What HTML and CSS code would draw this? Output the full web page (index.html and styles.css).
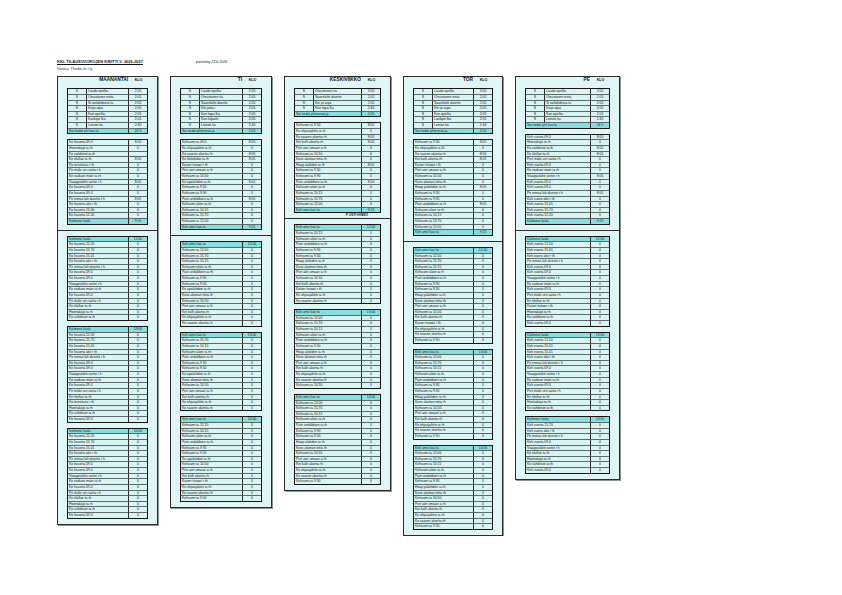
FILE: index.html
```html
<!DOCTYPE html>
<html lang="fi">
<head>
<meta charset="utf-8">
<title>KKL tilausvuorojen kriitti</title>
<link rel="stylesheet" href="styles.css">
</head>
<body>
<div class="page">
  <div class="top">
    <div class="title">KKL TILAUSVUOROJEN KRIITTI V. 2026-2027</div>
    <div class="date">päivitetty 22.6.2026</div>
  </div>
  <div class="sub">Vastaa: Thedia to Oy</div>

  <div class="days">
    <!-- MAANANTAI -->
    <section class="day">
      <div class="head"><span class="name">MAANANTAI</span><span class="klo">KLO</span></div>
      <table class="tbl">
        <tr><td class="s">S</td><td>Lauda opellia</td><td class="v">2:05</td></tr>
        <tr><td class="s">S</td><td>Otsustanen ostia</td><td class="v">2:05</td></tr>
        <tr><td class="s">S</td><td>Si ianlahdesta ta</td><td class="v">2:05</td></tr>
        <tr><td class="s">S</td><td>Kaijo aipa</td><td class="v">2:05</td></tr>
        <tr><td class="s">S</td><td>Kon opellia</td><td class="v">2:05</td></tr>
        <tr><td class="s">S</td><td>Kankipe lka</td><td class="v">2:05</td></tr>
        <tr><td class="s">S</td><td>Leinon tia</td><td class="v">2:40</td></tr>
        <tr class="hd"><td colspan="2">Sai tiedot yht kas ta</td><td class="v">24:5</td></tr>
      </table>
      <table class="tbl">
        <tr><td>Ke lisuorta 09.0</td><td class="v">8:05</td></tr>
        <tr><td>Hiontakäpi ia rh</td><td class="v">0</td></tr>
        <tr><td>Ko vahdisiot ia rh</td><td class="v"></td></tr>
        <tr><td>Ke tilalluo ta rh</td><td class="v">8:05</td></tr>
        <tr><td>Ka tervetunu r th</td><td class="v">0</td></tr>
        <tr><td>Pe mälo urn sarta r h</td><td class="v">0</td></tr>
        <tr><td>Ke vaduan mäin ia rh</td><td class="v">0</td></tr>
        <tr><td>Viaappalahti sortie r h</td><td class="v">8:05</td></tr>
        <tr><td>Ke lisuorta 09.0</td><td class="v">0</td></tr>
        <tr><td>Ke lisuorta 09.0</td><td class="v">0</td></tr>
        <tr><td>Pe inmaa lah duortie r h</td><td class="v">8:05</td></tr>
        <tr><td>Ke lisuorta aloi r th</td><td class="v">0</td></tr>
        <tr><td>Ke lisuorta 15.00</td><td class="v">0</td></tr>
        <tr><td>Ke lisuorta 12.20</td><td class="v">0</td></tr>
        <tr class="hd"><td>Kalmone laula</td><td class="v">9:25</td></tr>
      </table>
      <div class="rule"></div>
      <table class="tbl">
        <tr class="hd"><td>Kalmone laula</td><td class="v">12:00</td></tr>
        <tr><td>Ke lisuorta 12.20</td><td class="v">0</td></tr>
        <tr><td>Ke lisuorta 15.70</td><td class="v">0</td></tr>
        <tr><td>Ke lisuorta 15.01</td><td class="v">0</td></tr>
        <tr><td>Ke lisuorta aloi r th</td><td class="v">0</td></tr>
        <tr><td>Pe inmaa lah duortie r h</td><td class="v">0</td></tr>
        <tr><td>Ke lisuorta 09.0</td><td class="v">0</td></tr>
        <tr><td>Ke lisuorta 09.0</td><td class="v">0</td></tr>
        <tr><td>Viaappalahti sortie r h</td><td class="v">0</td></tr>
        <tr><td>Ke vaduan mäin ia rh</td><td class="v">0</td></tr>
        <tr><td>Ke lisuorta 09.0</td><td class="v">0</td></tr>
        <tr><td>Pe mälo urn sarta r h</td><td class="v">0</td></tr>
        <tr><td>Ke tilalluo ta rh</td><td class="v">0</td></tr>
        <tr><td>Hiontakäpi ia rh</td><td class="v">0</td></tr>
        <tr><td>Ko vahdisiot ia rh</td><td class="v">0</td></tr>
      </table>
      <table class="tbl">
        <tr class="hd"><td>Kalmone laula</td><td class="v">13:00</td></tr>
        <tr><td>Ke lisuorta 12.20</td><td class="v">0</td></tr>
        <tr><td>Ke lisuorta 15.70</td><td class="v">0</td></tr>
        <tr><td>Ke lisuorta 15.01</td><td class="v">0</td></tr>
        <tr><td>Ke lisuorta aloi r th</td><td class="v">0</td></tr>
        <tr><td>Pe inmaa lah duortie r h</td><td class="v">0</td></tr>
        <tr><td>Ke lisuorta 09.0</td><td class="v">0</td></tr>
        <tr><td>Ke lisuorta 09.0</td><td class="v">0</td></tr>
        <tr><td>Viaappalahti sortie r h</td><td class="v">0</td></tr>
        <tr><td>Ke vaduan mäin ia rh</td><td class="v">0</td></tr>
        <tr><td>Ke lisuorta 09.0</td><td class="v">0</td></tr>
        <tr><td>Pe mälo urn sarta r h</td><td class="v">0</td></tr>
        <tr><td>Ke tilalluo ta rh</td><td class="v">0</td></tr>
        <tr><td>Ka tervetunu r th</td><td class="v">0</td></tr>
        <tr><td>Hiontakäpi ia rh</td><td class="v">0</td></tr>
        <tr><td>Ko vahdisiot ia rh</td><td class="v">0</td></tr>
        <tr><td>Ke lisuorta 09.0</td><td class="v">0</td></tr>
      </table>
      <table class="tbl">
        <tr class="hd"><td>Kalmone laula</td><td class="v">10:00</td></tr>
        <tr><td>Ke lisuorta 12.20</td><td class="v">0</td></tr>
        <tr><td>Ke lisuorta 15.70</td><td class="v">0</td></tr>
        <tr><td>Ke lisuorta 15.01</td><td class="v">0</td></tr>
        <tr><td>Ke lisuorta aloi r th</td><td class="v">0</td></tr>
        <tr><td>Pe inmaa lah duortie r h</td><td class="v">0</td></tr>
        <tr><td>Ke lisuorta 09.0</td><td class="v">0</td></tr>
        <tr><td>Ke lisuorta 09.0</td><td class="v">0</td></tr>
        <tr><td>Viaappalahti sortie r h</td><td class="v">0</td></tr>
        <tr><td>Ke vaduan mäin ia rh</td><td class="v">0</td></tr>
        <tr><td>Ke lisuorta 09.0</td><td class="v">0</td></tr>
        <tr><td>Pe mälo urn sarta r h</td><td class="v">0</td></tr>
        <tr><td>Ke tilalluo ta rh</td><td class="v">0</td></tr>
        <tr><td>Hiontakäpi ia rh</td><td class="v">0</td></tr>
        <tr><td>Ko vahdisiot ia rh</td><td class="v">0</td></tr>
        <tr><td>Ke lisuorta 09.0</td><td class="v">0</td></tr>
      </table>
    </section>

    <!-- TI -->
    <section class="day">
      <div class="head"><span class="name">TI</span><span class="klo">KLO</span></div>
      <table class="tbl">
        <tr><td class="s">S</td><td>Lauda opellia</td><td class="v">2:05</td></tr>
        <tr><td class="s">S</td><td>Otsustanen tia</td><td class="v">2:05</td></tr>
        <tr><td class="s">S</td><td>Saarelahti duortie</td><td class="v">2:05</td></tr>
        <tr><td class="s">S</td><td>Kiti joiita i</td><td class="v">2:05</td></tr>
        <tr><td class="s">S</td><td>Kon topa lka</td><td class="v">2:05</td></tr>
        <tr><td class="s">S</td><td>Kan kilpailu</td><td class="v">2:05</td></tr>
        <tr><td class="s">S</td><td>Leinon tia</td><td class="v">2:40</td></tr>
        <tr class="hd"><td colspan="2">Sai tiedot yhteensä ja</td><td class="v">2:05</td></tr>
      </table>
      <table class="tbl">
        <tr><td>Kehuumi ia 09.0</td><td class="v">8:05</td></tr>
        <tr><td>Ke ohjaajaliitin ia rh</td><td class="v">0</td></tr>
        <tr><td>Ko saaren akortia rh</td><td class="v">8:05</td></tr>
        <tr><td>Ke illalohdon ia rh</td><td class="v">8:05</td></tr>
        <tr><td>Kaiser tiviawi r th</td><td class="v">0</td></tr>
        <tr><td>Pert aiin umaari a rh</td><td class="v">0</td></tr>
        <tr><td>Kehuumi ia 10.50</td><td class="v">0</td></tr>
        <tr><td>Ke apalahden ia rh</td><td class="v">8:05</td></tr>
        <tr><td>Kehuumi ia 9.50</td><td class="v">0</td></tr>
        <tr><td>Kehuumi ia 9.90</td><td class="v">0</td></tr>
        <tr><td>Pain undaldoen ia rh</td><td class="v">8:05</td></tr>
        <tr><td>Kehuumi aloin ia rh</td><td class="v">0</td></tr>
        <tr><td>Kehuumi ia 10.15</td><td class="v">0</td></tr>
        <tr><td>Kehuumi ia 15.70</td><td class="v">0</td></tr>
        <tr><td>Kehuumi ia 12.00</td><td class="v">0</td></tr>
        <tr class="hd"><td>Keh ume kas ta</td><td class="v">9:25</td></tr>
      </table>
      <div class="rule"></div>
      <table class="tbl">
        <tr class="hd"><td>Keh ume kas ta</td><td class="v">12:00</td></tr>
        <tr><td>Kehuumi ia 12.00</td><td class="v">0</td></tr>
        <tr><td>Kehuumi ia 15.70</td><td class="v">0</td></tr>
        <tr><td>Kehuumi ia 10.15</td><td class="v">0</td></tr>
        <tr><td>Kehuumi aloin ia rh</td><td class="v">0</td></tr>
        <tr><td>Pain undaldoen ia rh</td><td class="v">0</td></tr>
        <tr><td>Kehuumi ia 9.90</td><td class="v">0</td></tr>
        <tr><td>Kehuumi ia 9.50</td><td class="v">0</td></tr>
        <tr><td>Ke apalahden ia rh</td><td class="v">0</td></tr>
        <tr><td>Koss alaman tetia rh</td><td class="v">0</td></tr>
        <tr><td>Kehuumi ia 10.50</td><td class="v">0</td></tr>
        <tr><td>Pert aiin umaari a rh</td><td class="v">0</td></tr>
        <tr><td>Kei kalh akortia rh</td><td class="v">0</td></tr>
        <tr><td>Ke ohjaajaliitin ia rh</td><td class="v">0</td></tr>
        <tr><td>Ko saaren akortia rh</td><td class="v">0</td></tr>
      </table>
      <table class="tbl">
        <tr class="hd"><td>Keh ume kas ta</td><td class="v">13:00</td></tr>
        <tr><td>Kehuumi ia 15.70</td><td class="v">0</td></tr>
        <tr><td>Kehuumi ia 10.15</td><td class="v">0</td></tr>
        <tr><td>Kehuumi aloin ia rh</td><td class="v">0</td></tr>
        <tr><td>Pain undaldoen ia rh</td><td class="v">0</td></tr>
        <tr><td>Kehuumi ia 9.90</td><td class="v">0</td></tr>
        <tr><td>Kehuumi ia 9.50</td><td class="v">0</td></tr>
        <tr><td>Ke apalahden ia rh</td><td class="v">0</td></tr>
        <tr><td>Koss alaman tetia rh</td><td class="v">0</td></tr>
        <tr><td>Kehuumi ia 10.50</td><td class="v">0</td></tr>
        <tr><td>Pert aiin umaari a rh</td><td class="v">0</td></tr>
        <tr><td>Kei kalh akortia rh</td><td class="v">0</td></tr>
        <tr><td>Ke ohjaajaliitin ia rh</td><td class="v">0</td></tr>
        <tr><td>Ko saaren akortia rh</td><td class="v">0</td></tr>
      </table>
      <table class="tbl">
        <tr class="hd"><td>Keh ume kas ta</td><td class="v">14:00</td></tr>
        <tr><td>Kehuumi ia 15.70</td><td class="v">0</td></tr>
        <tr><td>Kehuumi ia 10.15</td><td class="v">0</td></tr>
        <tr><td>Kehuumi aloin ia rh</td><td class="v">0</td></tr>
        <tr><td>Pain undaldoen ia rh</td><td class="v">0</td></tr>
        <tr><td>Kehuumi ia 9.90</td><td class="v">0</td></tr>
        <tr><td>Kehuumi ia 9.50</td><td class="v">0</td></tr>
        <tr><td>Ke apalahden ia rh</td><td class="v">0</td></tr>
        <tr><td>Kehuumi ia 10.50</td><td class="v">0</td></tr>
        <tr><td>Pert aiin umaari a rh</td><td class="v">0</td></tr>
        <tr><td>Kei kalh akortia rh</td><td class="v">0</td></tr>
        <tr><td>Kaiser tiviawi r th</td><td class="v">0</td></tr>
        <tr><td>Ke ohjaajaliitin ia rh</td><td class="v">0</td></tr>
        <tr><td>Ko saaren akortia rh</td><td class="v">0</td></tr>
        <tr><td>Kehuumi ia 9.50</td><td class="v">0</td></tr>
      </table>
    </section>

    <!-- KESKIVIIKKO -->
    <section class="day">
      <div class="head"><span class="name">KESKIVIIKKO</span><span class="klo">KLO</span></div>
      <table class="tbl">
        <tr><td class="s">S</td><td>Otsustanen tia</td><td class="v">2:05</td></tr>
        <tr><td class="s">S</td><td>Saarelahti duortie</td><td class="v">2:05</td></tr>
        <tr><td class="s">S</td><td>Kiti joi aipa</td><td class="v">2:05</td></tr>
        <tr><td class="s">S</td><td>Kon topa lka</td><td class="v">2:40</td></tr>
        <tr class="hd"><td colspan="2">Sai tiedot yhteensä ja</td><td class="v">2:05</td></tr>
      </table>
      <table class="tbl">
        <tr><td>Kehuumi ia 9.50</td><td class="v">8:05</td></tr>
        <tr><td>Ke ohjaajaliitin ia rh</td><td class="v">0</td></tr>
        <tr><td>Ko saaren akortia rh</td><td class="v">8:05</td></tr>
        <tr><td>Kei kalh akortia rh</td><td class="v">8:05</td></tr>
        <tr><td>Pert aiin umaari a rh</td><td class="v">0</td></tr>
        <tr><td>Kehuumi ia 10.50</td><td class="v">0</td></tr>
        <tr><td>Koss alaman tetia rh</td><td class="v">0</td></tr>
        <tr><td>Haap alahden ia rh</td><td class="v">8:05</td></tr>
        <tr><td>Kehuumi ia 9.50</td><td class="v">0</td></tr>
        <tr><td>Kehuumi ia 9.90</td><td class="v">0</td></tr>
        <tr><td>Pain undaldoen ia rh</td><td class="v">8:05</td></tr>
        <tr><td>Kehuumi aloin ia rh</td><td class="v">0</td></tr>
        <tr><td>Kehuumi ia 10.15</td><td class="v">0</td></tr>
        <tr><td>Kehuumi ia 15.70</td><td class="v">0</td></tr>
        <tr><td>Kehuumi ia 12.00</td><td class="v">0</td></tr>
        <tr class="hd"><td>Keh ume kas ta</td><td class="v">9:25</td></tr>
      </table>
      <div class="note">P OSTI HINNO</div>
      <div class="rule"></div>
      <table class="tbl">
        <tr class="hd"><td>Keh ume kas ta</td><td class="v">12:00</td></tr>
        <tr><td>Kehuumi ia 10.15</td><td class="v">0</td></tr>
        <tr><td>Kehuumi aloin ia rh</td><td class="v">0</td></tr>
        <tr><td>Pain undaldoen ia rh</td><td class="v">0</td></tr>
        <tr><td>Kehuumi ia 9.90</td><td class="v">0</td></tr>
        <tr><td>Kehuumi ia 9.50</td><td class="v">0</td></tr>
        <tr><td>Haap alahden ia rh</td><td class="v">0</td></tr>
        <tr><td>Koss alaman tetia rh</td><td class="v">0</td></tr>
        <tr><td>Pert aiin umaari a rh</td><td class="v">0</td></tr>
        <tr><td>Kehuumi ia 10.50</td><td class="v">0</td></tr>
        <tr><td>Kei kalh akortia rh</td><td class="v">0</td></tr>
        <tr><td>Kaiser tiviawi r th</td><td class="v">0</td></tr>
        <tr><td>Ke ohjaajaliitin ia rh</td><td class="v">0</td></tr>
        <tr><td>Ko saaren akortia rh</td><td class="v">0</td></tr>
      </table>
      <table class="tbl">
        <tr class="hd"><td>Keh ume kas ta</td><td class="v">13:00</td></tr>
        <tr><td>Kehuumi ia 12.00</td><td class="v">0</td></tr>
        <tr><td>Kehuumi ia 15.70</td><td class="v">0</td></tr>
        <tr><td>Kehuumi ia 10.15</td><td class="v">0</td></tr>
        <tr><td>Kehuumi aloin ia rh</td><td class="v">0</td></tr>
        <tr><td>Pain undaldoen ia rh</td><td class="v">0</td></tr>
        <tr><td>Kehuumi ia 9.50</td><td class="v">0</td></tr>
        <tr><td>Haap alahden ia rh</td><td class="v">0</td></tr>
        <tr><td>Koss alaman tetia rh</td><td class="v">0</td></tr>
        <tr><td>Pert aiin umaari a rh</td><td class="v">0</td></tr>
        <tr><td>Kei kalh akortia rh</td><td class="v">0</td></tr>
        <tr><td>Ke ohjaajaliitin ia rh</td><td class="v">0</td></tr>
        <tr><td>Ko saaren akortia rh</td><td class="v">0</td></tr>
        <tr><td>Kehuumi ia 10.50</td><td class="v">0</td></tr>
      </table>
      <table class="tbl">
        <tr class="hd"><td>Keh ume kas ta</td><td class="v">14:00</td></tr>
        <tr><td>Kehuumi ia 12.00</td><td class="v">0</td></tr>
        <tr><td>Kehuumi ia 15.70</td><td class="v">0</td></tr>
        <tr><td>Kehuumi ia 10.15</td><td class="v">0</td></tr>
        <tr><td>Kehuumi aloin ia rh</td><td class="v">0</td></tr>
        <tr><td>Pain undaldoen ia rh</td><td class="v">0</td></tr>
        <tr><td>Kehuumi ia 9.90</td><td class="v">0</td></tr>
        <tr><td>Kehuumi ia 9.50</td><td class="v">0</td></tr>
        <tr><td>Haap alahden ia rh</td><td class="v">0</td></tr>
        <tr><td>Koss alaman tetia rh</td><td class="v">0</td></tr>
        <tr><td>Kehuumi ia 10.50</td><td class="v">0</td></tr>
        <tr><td>Pert aiin umaari a rh</td><td class="v">0</td></tr>
        <tr><td>Kei kalh akortia rh</td><td class="v">0</td></tr>
        <tr><td>Ke ohjaajaliitin ia rh</td><td class="v">0</td></tr>
        <tr><td>Ko saaren akortia rh</td><td class="v">0</td></tr>
        <tr><td>Kehuumi ia 9.50</td><td class="v">0</td></tr>
      </table>
    </section>

    <!-- TOR -->
    <section class="day">
      <div class="head"><span class="name">TOR</span><span class="klo">KLO</span></div>
      <table class="tbl">
        <tr><td class="s">S</td><td>Lauda opellia</td><td class="v">2:05</td></tr>
        <tr><td class="s">S</td><td>Otsustanen ostia</td><td class="v">2:05</td></tr>
        <tr><td class="s">S</td><td>Saarelahti duortie</td><td class="v">2:05</td></tr>
        <tr><td class="s">S</td><td>Kiti joi aipa</td><td class="v">2:05</td></tr>
        <tr><td class="s">S</td><td>Kon opellia</td><td class="v">2:05</td></tr>
        <tr><td class="s">S</td><td>Lankipe lka</td><td class="v">2:05</td></tr>
        <tr><td class="s">S</td><td>Leinon tia</td><td class="v">2:40</td></tr>
        <tr class="hd"><td colspan="2">Sai tiedot yhteensä ja</td><td class="v">2:05</td></tr>
      </table>
      <table class="tbl">
        <tr><td>Kehuumi ia 9.50</td><td class="v">8:05</td></tr>
        <tr><td>Ke ohjaajaliitin ia rh</td><td class="v">0</td></tr>
        <tr><td>Ko saaren akortia rh</td><td class="v">8:05</td></tr>
        <tr><td>Kei kalh akortia rh</td><td class="v">8:05</td></tr>
        <tr><td>Kaiser tiviawi r th</td><td class="v">0</td></tr>
        <tr><td>Pert aiin umaari a rh</td><td class="v">0</td></tr>
        <tr><td>Kehuumi ia 10.50</td><td class="v">0</td></tr>
        <tr><td>Koss alaman tetia rh</td><td class="v">0</td></tr>
        <tr><td>Haap palahden ia rh</td><td class="v">8:05</td></tr>
        <tr><td>Kehuumi ia 9.50</td><td class="v">0</td></tr>
        <tr><td>Kehuumi ia 9.90</td><td class="v">0</td></tr>
        <tr><td>Pain undaldoen ia rh</td><td class="v">8:05</td></tr>
        <tr><td>Kehuumi aloin ia rh</td><td class="v">0</td></tr>
        <tr><td>Kehuumi ia 10.15</td><td class="v">0</td></tr>
        <tr><td>Kehuumi ia 15.70</td><td class="v">0</td></tr>
        <tr><td>Kehuumi ia 12.00</td><td class="v">0</td></tr>
        <tr class="hd"><td>Keh ume kas ta</td><td class="v">9:25</td></tr>
      </table>
      <div class="rule"></div>
      <table class="tbl">
        <tr class="hd"><td>Keh ume kas ta</td><td class="v">12:00</td></tr>
        <tr><td>Kehuumi ia 12.00</td><td class="v">0</td></tr>
        <tr><td>Kehuumi ia 15.70</td><td class="v">0</td></tr>
        <tr><td>Kehuumi ia 10.15</td><td class="v">0</td></tr>
        <tr><td>Kehuumi aloin ia rh</td><td class="v">0</td></tr>
        <tr><td>Pain undaldoen ia rh</td><td class="v">0</td></tr>
        <tr><td>Kehuumi ia 9.90</td><td class="v">0</td></tr>
        <tr><td>Kehuumi ia 9.50</td><td class="v">0</td></tr>
        <tr><td>Haap palahden ia rh</td><td class="v">0</td></tr>
        <tr><td>Koss alaman tetia rh</td><td class="v">0</td></tr>
        <tr><td>Pert aiin umaari a rh</td><td class="v">0</td></tr>
        <tr><td>Kehuumi ia 10.50</td><td class="v">0</td></tr>
        <tr><td>Kei kalh akortia rh</td><td class="v">0</td></tr>
        <tr><td>Kaiser tiviawi r th</td><td class="v">0</td></tr>
        <tr><td>Ke ohjaajaliitin ia rh</td><td class="v">0</td></tr>
        <tr><td>Ko saaren akortia rh</td><td class="v">0</td></tr>
        <tr><td>Kehuumi ia 9.50</td><td class="v">0</td></tr>
      </table>
      <table class="tbl">
        <tr class="hd"><td>Keh ume kas ta</td><td class="v">13:00</td></tr>
        <tr><td>Kehuumi ia 12.00</td><td class="v">0</td></tr>
        <tr><td>Kehuumi ia 15.70</td><td class="v">0</td></tr>
        <tr><td>Kehuumi ia 10.15</td><td class="v">0</td></tr>
        <tr><td>Kehuumi aloin ia rh</td><td class="v">0</td></tr>
        <tr><td>Pain undaldoen ia rh</td><td class="v">0</td></tr>
        <tr><td>Kehuumi ia 9.90</td><td class="v">0</td></tr>
        <tr><td>Kehuumi ia 9.50</td><td class="v">0</td></tr>
        <tr><td>Haap palahden ia rh</td><td class="v">0</td></tr>
        <tr><td>Koss alaman tetia rh</td><td class="v">0</td></tr>
        <tr><td>Kehuumi ia 10.50</td><td class="v">0</td></tr>
        <tr><td>Pert aiin umaari a rh</td><td class="v">0</td></tr>
        <tr><td>Kei kalh akortia rh</td><td class="v">0</td></tr>
        <tr><td>Ke ohjaajaliitin ia rh</td><td class="v">0</td></tr>
        <tr><td>Ko saaren akortia rh</td><td class="v">0</td></tr>
        <tr><td>Kehuumi ia 9.50</td><td class="v">0</td></tr>
      </table>
      <table class="tbl">
        <tr class="hd"><td>Keh ume kas ta</td><td class="v">14:00</td></tr>
        <tr><td>Kehuumi ia 12.00</td><td class="v">0</td></tr>
        <tr><td>Kehuumi ia 15.70</td><td class="v">0</td></tr>
        <tr><td>Kehuumi ia 10.15</td><td class="v">0</td></tr>
        <tr><td>Kehuumi aloin ia rh</td><td class="v">0</td></tr>
        <tr><td>Pain undaldoen ia rh</td><td class="v">0</td></tr>
        <tr><td>Kehuumi ia 9.90</td><td class="v">0</td></tr>
        <tr><td>Haap palahden ia rh</td><td class="v">0</td></tr>
        <tr><td>Koss alaman tetia rh</td><td class="v">0</td></tr>
        <tr><td>Kehuumi ia 10.50</td><td class="v">0</td></tr>
        <tr><td>Pert aiin umaari a rh</td><td class="v">0</td></tr>
        <tr><td>Kei kalh akortia rh</td><td class="v">0</td></tr>
        <tr><td>Ke ohjaajaliitin ia rh</td><td class="v">0</td></tr>
        <tr><td>Ko saaren akortia rh</td><td class="v">0</td></tr>
        <tr><td>Kehuumi ia 9.50</td><td class="v">0</td></tr>
      </table>
    </section>

    <!-- PE -->
    <section class="day">
      <div class="head"><span class="name">PE</span><span class="klo">KLO</span></div>
      <table class="tbl">
        <tr><td class="s">S</td><td>Lauda opellia</td><td class="v">2:05</td></tr>
        <tr><td class="s">S</td><td>Otsustanen ostia</td><td class="v">2:05</td></tr>
        <tr><td class="s">S</td><td>Si ianlahdesta ta</td><td class="v">2:05</td></tr>
        <tr><td class="s">S</td><td>Kaijo aipa</td><td class="v">2:05</td></tr>
        <tr><td class="s">S</td><td>Kon opellia</td><td class="v">2:05</td></tr>
        <tr><td class="s">S</td><td>Leinon tia</td><td class="v">2:40</td></tr>
        <tr class="hd"><td colspan="2">Sai tiedot yht kas ta</td><td class="v">24:5</td></tr>
      </table>
      <table class="tbl">
        <tr><td>Keh vuorta 09.0</td><td class="v">8:05</td></tr>
        <tr><td>Hiontakäpi ia rh</td><td class="v">0</td></tr>
        <tr><td>Ko vahdisiot ia rh</td><td class="v">8:05</td></tr>
        <tr><td>Ke tilalluo ta rh</td><td class="v">8:05</td></tr>
        <tr><td>Pert mälo urn sarta r h</td><td class="v">0</td></tr>
        <tr><td>Keh vuorta 09.0</td><td class="v">0</td></tr>
        <tr><td>Ke vaduan mäin ia rh</td><td class="v">0</td></tr>
        <tr><td>Viaappalahti sortie r h</td><td class="v">8:05</td></tr>
        <tr><td>Keh vuorta 09.0</td><td class="v">0</td></tr>
        <tr><td>Keh vuorta 09.0</td><td class="v">0</td></tr>
        <tr><td>Pe inmaa lah duortie r h</td><td class="v">8:05</td></tr>
        <tr><td>Keh vuoro aloi r th</td><td class="v">0</td></tr>
        <tr><td>Keh vuorta 15.01</td><td class="v">0</td></tr>
        <tr><td>Keh vuorta 15.70</td><td class="v">0</td></tr>
        <tr><td>Keh vuorta 12.20</td><td class="v">0</td></tr>
        <tr class="hd"><td>Kalmone laula</td><td class="v">9:25</td></tr>
      </table>
      <div class="rule"></div>
      <table class="tbl">
        <tr class="hd"><td>Kalmone laula</td><td class="v">12:00</td></tr>
        <tr><td>Keh vuorta 12.20</td><td class="v">0</td></tr>
        <tr><td>Keh vuorta 15.01</td><td class="v">0</td></tr>
        <tr><td>Keh vuoro aloi r th</td><td class="v">0</td></tr>
        <tr><td>Pe inmaa lah duortie r h</td><td class="v">0</td></tr>
        <tr><td>Keh vuorta 09.0</td><td class="v">0</td></tr>
        <tr><td>Keh vuorta 09.0</td><td class="v">0</td></tr>
        <tr><td>Viaappalahti sortie r h</td><td class="v">0</td></tr>
        <tr><td>Ke vaduan mäin ia rh</td><td class="v">0</td></tr>
        <tr><td>Keh vuorta 09.0</td><td class="v">0</td></tr>
        <tr><td>Pert mälo urn sarta r h</td><td class="v">0</td></tr>
        <tr><td>Ke tilalluo ta rh</td><td class="v">0</td></tr>
        <tr><td>Kaiser tiviawi r th</td><td class="v">0</td></tr>
        <tr><td>Hiontakäpi ia rh</td><td class="v">0</td></tr>
        <tr><td>Ko vahdisiot ia rh</td><td class="v">0</td></tr>
        <tr><td>Keh vuorta 09.0</td><td class="v">0</td></tr>
      </table>
      <table class="tbl">
        <tr class="hd"><td>Kalmone laula</td><td class="v">13:00</td></tr>
        <tr><td>Keh vuorta 12.20</td><td class="v">0</td></tr>
        <tr><td>Keh vuorta 15.01</td><td class="v">0</td></tr>
        <tr><td>Keh vuorta 15.01</td><td class="v">0</td></tr>
        <tr><td>Keh vuoro aloi r th</td><td class="v">0</td></tr>
        <tr><td>Pe inmaa lah duortie r h</td><td class="v">0</td></tr>
        <tr><td>Keh vuorta 09.0</td><td class="v">0</td></tr>
        <tr><td>Viaappalahti sortie r h</td><td class="v">0</td></tr>
        <tr><td>Ke vaduan mäin ia rh</td><td class="v">0</td></tr>
        <tr><td>Keh vuorta 09.0</td><td class="v">0</td></tr>
        <tr><td>Pert mälo urn sarta r h</td><td class="v">0</td></tr>
        <tr><td>Ke tilalluo ta rh</td><td class="v">0</td></tr>
        <tr><td>Hiontakäpi ia rh</td><td class="v">0</td></tr>
        <tr><td>Ko vahdisiot ia rh</td><td class="v">0</td></tr>
      </table>
      <table class="tbl">
        <tr class="hd"><td>Kalmone laula</td><td class="v">14:00</td></tr>
        <tr><td>Keh vuorta 15.70</td><td class="v">0</td></tr>
        <tr><td>Keh vuoro aloi r th</td><td class="v">0</td></tr>
        <tr><td>Pe inmaa lah duortie r h</td><td class="v">0</td></tr>
        <tr><td>Keh vuorta 09.0</td><td class="v">0</td></tr>
        <tr><td>Viaappalahti sortie r h</td><td class="v">0</td></tr>
        <tr><td>Ke tilalluo ta rh</td><td class="v">0</td></tr>
        <tr><td>Hiontakäpi ia rh</td><td class="v">0</td></tr>
        <tr><td>Ko vahdisiot ia rh</td><td class="v">0</td></tr>
        <tr><td>Keh vuorta 09.0</td><td class="v">0</td></tr>
      </table>
    </section>
  </div>
</div>
</body>
</html>
```

FILE: styles.css
```css
* {
  box-sizing: border-box;
}

html, body {
  margin: 0;
  background: #ffffff;
}

body {
  font-family: "Liberation Sans", Arial, sans-serif;
  color: #141414;
}

.page {
  padding: 59px 0 0 57px;
}

.top {
  display: flex;
  align-items: center;
  height: 6px;
}

.title {
  width: 139px;
  font-size: 4px;
  line-height: 6px;
  font-weight: bold;
  text-decoration: underline;
  white-space: nowrap;
}

.date {
  font-size: 3.6px;
  line-height: 6px;
  white-space: nowrap;
}

.sub {
  margin-top: 1px;
  height: 6px;
  font-size: 3.8px;
  line-height: 6px;
  color: #333;
  white-space: nowrap;
}

.days {
  display: grid;
  grid-template-columns: 101px 102px 107px 100px 105px;
  column-gap: 12px;
  align-items: start;
  margin-top: 3.7px;
}

.day {
  display: flex;
  flex-direction: column;
  background: #e0f6f6;
  border: 1px solid #2c2c2c;
  box-shadow: 1px 1px 0 #8a9696;
  padding: 0 9px 5px 9px;
}

.head {
  display: flex;
  height: 11.6px;
  font-weight: bold;
  white-space: nowrap;
}

.head .name {
  flex: 1;
  text-align: right;
  font-size: 4.8px;
  line-height: 6.6px;
  padding-right: 1px;
}

.head .klo {
  width: 19px;
  text-align: center;
  font-size: 3.6px;
  line-height: 6.8px;
}

.tbl {
  width: 100%;
  table-layout: fixed;
  border-collapse: separate;
  border-spacing: 0;
  border: 1px solid #151515;
  background: #daf3f3;
  font-size: 3.4px;
}

.tbl + .tbl {
  margin-top: 5px;
}

.tbl td {
  height: 5.62px;
  padding: 0 0 0 1px;
  line-height: 4.62px;
  border-bottom: 1px solid #5d6a6a;
  white-space: nowrap;
  overflow: hidden;
  vertical-align: middle;
}

.tbl tr:last-child td {
  border-bottom: 0;
  height: 4.62px;
}

.tbl td + td {
  border-left: 1px solid #2a2a2a;
}

.tbl td.s {
  width: 18px;
  padding: 0;
  text-align: center;
}

.tbl td.v {
  width: 19px;
  padding: 0;
  text-align: center;
}

.tbl tr.hd td {
  background: #88dede;
  color: #0e2a2a;
}

.rule {
  margin: 5px -9px;
  border-top: 1px solid #2c2c2c;
}

.note {
  height: 5px;
  padding-right: 13px;
  text-align: right;
  font-size: 3.3px;
  line-height: 5px;
  font-weight: bold;
  white-space: nowrap;
}

.note + .rule {
  margin-top: 0;
}
```
